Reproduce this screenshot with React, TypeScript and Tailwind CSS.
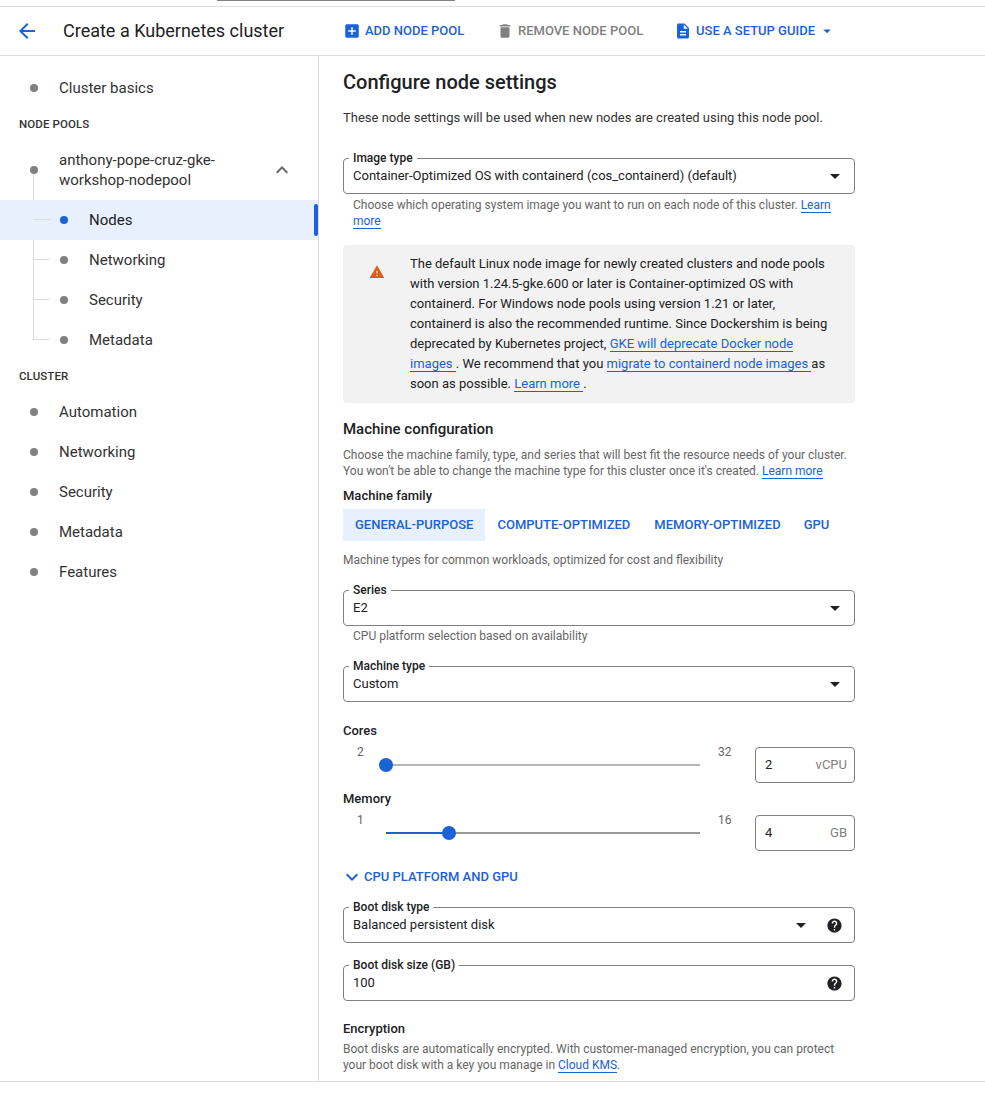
const BLUE = 'text-[#1a62d6]';

const Icon = ({ d, className }: { d: string; className: string }) => (
    <svg viewBox="0 0 24 24" fill="currentColor" className={className}>
        <path d={d} />
    </svg>
);

const icons = {
    back: 'M20 11H7.83l5.59-5.59L12 4l-8 8 8 8 1.41-1.41L7.83 13H20v-2z',
    add: 'M19 3H5c-1.11 0-2 .9-2 2v14c0 1.1.89 2 2 2h14c1.1 0 2-.9 2-2V5c0-1.1-.9-2-2-2zm-2 10h-4v4h-2v-4H7v-2h4V7h2v4h4v2z',
    trash: 'M6 19c0 1.1.9 2 2 2h8c1.1 0 2-.9 2-2V7H6v12zM19 4h-3.5l-1-1h-5l-1 1H5v2h14V4z',
    doc: 'M14 2H6c-1.1 0-1.99.9-1.99 2L4 20c0 1.1.89 2 1.99 2H18c1.1 0 2-.9 2-2V8l-6-6zm2 16H8v-2h8v2zm0-4H8v-2h8v2zm-3-5V3.5L18.5 9H13z',
    warning: 'M1 21h22L12 2 1 21zm12-3h-2v-2h2v2zm0-4h-2v-4h2v4z',
    help: 'M12 2C6.48 2 2 6.48 2 12s4.48 10 10 10 10-4.48 10-10S17.52 2 12 2zm1 17h-2v-2h2v2zm2.07-7.75l-.9.92C13.45 12.9 13 13.5 13 15h-2v-.5c0-1.1.45-2.1 1.17-2.83l1.24-1.26c.37-.36.59-.86.59-1.41 0-1.1-.9-2-2-2s-2 .9-2 2H8c0-2.21 1.79-4 4-4s4 1.79 4 4c0 .88-.36 1.68-.93 2.25z',
    less: 'M12 8l-6 6 1.41 1.41L12 10.83l4.59 4.58L18 14z',
    more: 'M16.59 8.59L12 13.17 7.41 8.59 6 10l6 6 6-6z',
    drop: 'M7 10l5 5 5-5z',
};

const A = ({ children }: { children: React.ReactNode }) => (
    <a className="text-[#1a62d6] border-b border-[#1a62d6] whitespace-pre-wrap">{children}</a>
);

const NavItem = ({ label, nested, active }: { label: string; nested?: boolean; active?: boolean }) => (
    <div className={`relative flex items-center h-10 text-[15px] text-[#333333] ${nested ? 'pl-[60px]' : 'pl-[30px]'} ${active ? 'bg-[#e8f0fe]' : ''}`}>
        <span className={`w-2 h-2 rounded-full ${active ? 'bg-[#1a62d6]' : 'bg-[#808080]'}`} />
        <span className={`ml-[21px] ${active ? 'text-[#202124]' : ''}`}>{label}</span>
        {nested && <span className="absolute left-[33px] top-[19px] w-[17px] h-px bg-[#dadce0]" />}
        {active && <span className="absolute right-0 top-1 w-1 h-8 rounded-sm bg-[#1a62d6]" />}
    </div>
);

const SectionLabel = ({ children, className }: { children: string; className: string }) => (
    <div className={`pl-[19px] text-[11.5px] leading-4 font-medium tracking-[0.1px] text-[#333333] ${className}`}>{children}</div>
);

const Sidebar = () => (
    <aside className="w-[319px] shrink-0 border-r border-[#dadce0] pt-3">
        <NavItem label="Cluster basics" />
        <SectionLabel className="mt-2">NODE POOLS</SectionLabel>
        <div className="relative mt-[18px]">
            <span className="absolute left-[33px] top-[24px] w-px h-[165px] bg-[#dadce0]" />
            <div className="flex items-center h-10 mb-2.5 pl-[30px] pr-6 text-[15px] leading-5 text-[#333333]">
                <span className="w-2 h-2 rounded-full bg-[#808080] shrink-0" />
                <span className="ml-[21px] flex-1">anthony-pope-cruz-gke-<br />workshop-nodepool</span>
                <Icon d={icons.less} className="w-6 h-6 text-[#666666]" />
            </div>
            <NavItem nested active label="Nodes" />
            <NavItem nested label="Networking" />
            <NavItem nested label="Security" />
            <NavItem nested label="Metadata" />
        </div>
        <SectionLabel className="mt-2">CLUSTER</SectionLabel>
        <div className="mt-2">
            <NavItem label="Automation" />
            <NavItem label="Networking" />
            <NavItem label="Security" />
            <NavItem label="Metadata" />
            <NavItem label="Features" />
        </div>
    </aside>
);

const Field = ({ label, value, children, className, hint }: { label: string; value: string; children?: React.ReactNode; className: string; hint?: boolean }) => (
    <div className={`relative flex items-center h-9 pl-[9px] pr-[11px] rounded border border-[#808080] ${className}`}>
        <span className="absolute left-[5px] -top-[9px] px-1 bg-white text-[12px] leading-4 font-medium text-[#202124]">{label}</span>
        <span className="flex-1 text-[13px] text-[#202124]">{value}</span>
        {children}
        {hint && <Icon d={icons.help} className="w-[17px] h-[17px] ml-[17px] text-[#202124]" />}
    </div>
);

const Caret = () => <Icon d={icons.drop} className="w-6 h-6 -mr-[4px] text-[#202124]" />;

const SliderRow = ({ label, min, max, pct, value, unit, dark }: { label: string; min: string; max: string; pct: number; value: string; unit: string; dark?: boolean }) => (
    <div>
        <div className="text-[13px] leading-4 font-medium text-[#202124]">{label}</div>
        <div className="flex h-[35px] mt-2">
            <span className="w-[43px] -mt-[3px] pl-[14px] text-[12px] leading-4 text-[#666666]">{min}</span>
            <div className={`relative w-[314px] h-0.5 mt-[17px] ${dark ? 'bg-[#999999]' : 'bg-[#b5b5b5]'}`}>
                <div className="absolute left-0 top-0 h-full bg-[#1a62d6]" style={{ width: `${pct}%` }} />
                <span className="absolute -top-1.5 -ml-[7px] w-3.5 h-3.5 rounded-full bg-[#1a62d6]" style={{ left: `${pct}%` }} />
            </div>
            <span className="ml-[18px] w-[37px] -mt-[3px] text-[12px] leading-4 text-[#666666]">{max}</span>
            <div className="flex items-center w-[100px] h-9 pl-[9px] pr-[7px] rounded border border-[#808080]">
                <span className="flex-1 text-[13px] text-[#202124]">{value}</span>
                <span className="text-[13px] text-[#808080]">{unit}</span>
            </div>
        </div>
    </div>
);

const App = () => {
    return (
        <div className="h-[1095px] w-[985px] overflow-hidden bg-white font-['Roboto',sans-serif]">
            <div className="relative h-[7px] border-b border-[#dadce0]">
                <span className="absolute left-[217px] top-0 w-[238px] h-px bg-[#808080]" />
            </div>
            <header className="flex items-center h-[49px] border-b border-[#dadce0]">
                <Icon d={icons.back} className={`w-6 h-6 ml-[15px] ${BLUE}`} />
                <h1 className="ml-6 w-[280px] -mt-[2px] text-[18px] text-[#202124]">Create a Kubernetes cluster</h1>
                <div className={`flex items-center w-[153px] text-[13px] font-medium ${BLUE}`}>
                    <Icon d={icons.add} className="w-[18px] h-[18px] mr-1" />
                    ADD NODE POOL
                </div>
                <div className="flex items-center w-[178px] text-[13px] font-medium text-[#808080]">
                    <Icon d={icons.trash} className="w-[18px] h-[18px] mr-1" />
                    REMOVE NODE POOL
                </div>
                <div className={`flex items-center text-[13px] font-medium ${BLUE}`}>
                    <Icon d={icons.doc} className="w-[18px] h-[18px] mr-1" />
                    USE A SETUP GUIDE
                    <Icon d={icons.drop} className="w-[18px] h-[18px] ml-[3px]" />
                </div>
            </header>
            <div className="flex h-[1026px] border-b border-[#dadce0]">
                <Sidebar />
                <main className="w-[512px] ml-6 overflow-hidden">
                    <h2 className="mt-3 text-[20px] leading-7 font-medium text-[#202124]">Configure node settings</h2>
                    <p className="mt-3 text-[13px] leading-5 text-[#333333]">
                        These node settings will be used when new nodes are created using this node pool.
                    </p>
                    <Field className="mt-[30px]" label="Image type" value="Container-Optimized OS with containerd (cos_containerd) (default)">
                        <Caret />
                    </Field>
                    <p className="mt-[3px] px-[10px] text-[12px] leading-4 text-[#666666]">
                        Choose which operating system image you want to run on each node of this cluster. <A>Learn</A> <A>more</A>
                    </p>
                    <div className="flex mt-4 h-[158px] rounded bg-[#f2f2f2] pt-[9px]">
                        <Icon d={icons.warning} className="w-4 h-4 mt-[10px] ml-[26px] shrink-0 text-[#e8590c]" />
                        <p className="ml-[25px] w-[420px] text-[13px] leading-5 text-[#202124]">
                            The default Linux node image for newly created clusters and node pools with version 1.24.5-gke.600 or later is Container-optimized OS with containerd. For Windows node pools using version 1.21 or later, containerd is also the recommended runtime. Since Dockershim is being deprecated by Kubernetes project, <A>GKE will deprecate Docker node</A> <A>images </A>. We recommend that you <A>migrate to containerd node images </A>as soon as possible. <A>Learn more </A>.
                        </p>
                    </div>
                    <h3 className="mt-4 text-[15px] leading-5 font-medium text-[#202124]">Machine configuration</h3>
                    <p className="mt-2 text-[12px] leading-4 text-[#666666]">
                        Choose the machine family, type, and series that will best fit the resource needs of your cluster. You won't be able to change the machine type for this cluster once it's created. <A>Learn more</A>
                    </p>
                    <div className="mt-[9px] text-[13px] leading-4 font-medium text-[#202124]">Machine family</div>
                    <div className={`flex items-center mt-[5px] text-[13px] font-medium ${BLUE}`}>
                        <span className="flex items-center h-8 px-3 bg-[#e8f0fe]">GENERAL-PURPOSE</span>
                        <span className="ml-3">COMPUTE-OPTIMIZED</span>
                        <span className="ml-6">MEMORY-OPTIMIZED</span>
                        <span className="ml-[23px]">GPU</span>
                    </div>
                    <p className="mt-[11px] text-[12px] leading-4 text-[#666666]">
                        Machine types for common workloads, optimized for cost and flexibility
                    </p>
                    <Field className="mt-[22px]" label="Series" value="E2">
                        <Caret />
                    </Field>
                    <p className="mt-[2px] px-[10px] text-[12px] leading-4 text-[#666666]">
                        CPU platform selection based on availability
                    </p>
                    <Field className="mt-[22px]" label="Machine type" value="Custom">
                        <Caret />
                    </Field>
                    <div className="mt-[21px]">
                        <SliderRow label="Cores" min="2" max="32" pct={0} value="2" unit="vCPU" />
                    </div>
                    <div className="mt-[9px]">
                        <SliderRow label="Memory" min="1" max="16" pct={20} value="4" unit="GB" dark />
                    </div>
                    <div className={`flex items-center mt-[15px] h-6 text-[13px] font-medium ${BLUE}`}>
                        <Icon d={icons.more} className="w-6 h-6 -ml-[3px]" />
                        CPU PLATFORM AND GPU
                    </div>
                    <Field className="mt-[18px]" label="Boot disk type" value="Balanced persistent disk" hint>
                        <Caret />
                    </Field>
                    <Field className="mt-[22px]" label="Boot disk size (GB)" value="100" hint />
                    <div className="mt-5 text-[13px] leading-4 font-medium text-[#202124]">Encryption</div>
                    <p className="mt-[4px] text-[12px] leading-4 text-[#666666]">
                        Boot disks are automatically encrypted. With customer-managed encryption, you can protect your boot disk with a key you manage in <A>Cloud KMS</A>.
                    </p>
                </main>
            </div>
        </div>
    );
};

export default App;
